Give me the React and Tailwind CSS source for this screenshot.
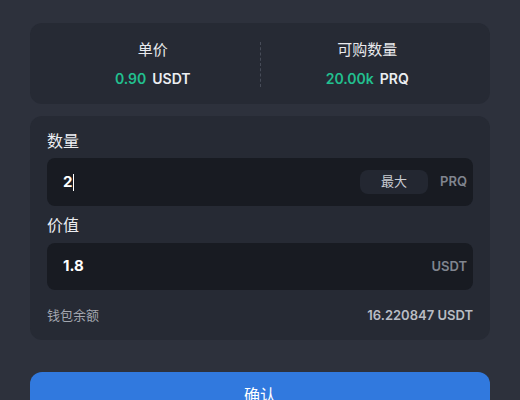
import React from 'react';

const font = { fontFamily: 'Inter, "Noto Sans CJK SC", sans-serif' };

const Stat = ({ label, value, unit }) => (
  <div className="flex-1 flex flex-col items-center gap-[9px]">
    <div className="text-[15px] leading-5 text-[#e9eaee]">{label}</div>
    <div className="flex items-baseline gap-[6px] text-[14px] leading-5 font-semibold">
      <span className="text-[#22c08f]">{value}</span>
      <span className="text-[#eceef2]">{unit}</span>
    </div>
  </div>
);

export default function App() {
  return (
    <div
      style={font}
      className="w-[520px] h-[400px] overflow-hidden bg-[#2d313c] pt-[23px] px-[30px]"
    >
      {/* Price / available */}
      <div className="h-[81px] rounded-xl bg-[#262a34] flex items-center px-4 pt-[2px]">
        <Stat label="单价" value="0.90" unit="USDT" />
        <div className="h-[45px] border-l border-dashed border-[#474c58]" />
        <Stat label="可购数量" value="20.00k" unit="PRQ" />
      </div>

      {/* Form */}
      <div className="mt-3 rounded-xl bg-[#262a34] px-[17px] pt-[12px] pb-[15px]">
        <div className="text-[16px] leading-[26px] text-[#eceef2]">数量</div>
        <div className="mt-[4px] h-12 rounded-lg bg-[#181b22] flex items-center pl-4 pr-[6px]">
          <div className="flex-1 flex items-center text-[15px] font-bold text-white">
            2<span className="w-px h-[17px] bg-white ml-px" />
          </div>
          <div className="h-6 w-[68px] rounded-lg bg-[#232731] flex items-center justify-center text-[13px] text-[#c9ccd3]">
            最大
          </div>
          <div className="ml-3 text-[13px] font-semibold text-[#80858f]">PRQ</div>
        </div>

        <div className="mt-[6px] text-[16px] leading-[26px] text-[#eceef2]">价值</div>
        <div className="mt-[5px] h-[47px] rounded-lg bg-[#181b22] flex items-center pl-4 pr-[6px]">
          <div className="flex-1 text-[15px] font-bold text-white">1.8</div>
          <div className="text-[13px] font-semibold text-[#80858f]">USDT</div>
        </div>

        <div className="mt-[15px] flex items-center justify-between text-[13px] leading-5">
          <span className="text-[#a3a7b0]">钱包余额</span>
          <span className="font-semibold text-[#b9bcc4]">16.220847 USDT</span>
        </div>
      </div>

      <button className="mt-8 w-full h-[46px] rounded-xl bg-[#3179de] text-[16px] text-white">
        确认
      </button>
    </div>
  );
}
